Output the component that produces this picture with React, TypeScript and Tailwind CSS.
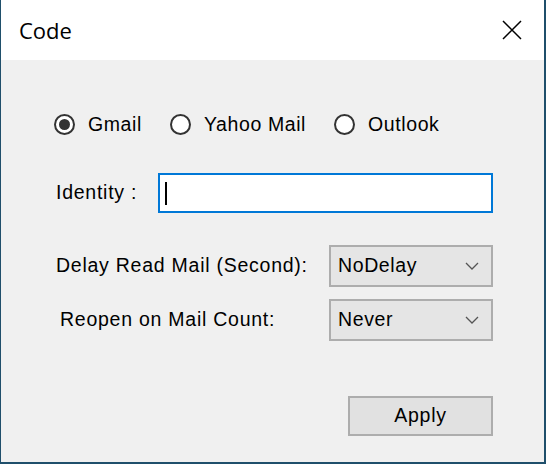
import { useState } from 'react';

const font = { fontFamily: '"Liberation Sans", Arial, sans-serif' };

function Radio({ label, checked, onClick }: { label: string; checked: boolean; onClick: () => void }) {
    return (
        <button type="button" onClick={onClick} className="flex items-center gap-[13px] text-[19.5px] tracking-[0.6px] text-black leading-none">
            <span className="w-[21px] h-[21px] rounded-full border-2 border-[#333333] bg-white flex items-center justify-center">
                {checked && <span className="w-[11px] h-[11px] rounded-full bg-[#333333]" />}
            </span>
            <span>{label}</span>
        </button>
    );
}

function Combo({ value }: { value: string }) {
    return (
        <div className="w-[164px] h-[42px] border-2 border-[#adadad] bg-[#e5e5e5] flex items-center justify-between pl-[7px] pr-[12px] text-[19.5px] tracking-[0.6px] text-black">
            <span>{value}</span>
            <svg width="14" height="8" viewBox="0 0 14 8" fill="none" stroke="#555" strokeWidth="1.3">
                <path d="M1 1l6 6 6-6" />
            </svg>
        </div>
    );
}

export default function App() {
    const [mail, setMail] = useState('Gmail');

    return (
        <div className="w-[546px] h-[464px] flex flex-col bg-[#f0f0f0] border-l border-r-2 border-b-2 border-[#1f4f6b]" style={font}>
            {/* barra de título */}
            <div className="h-[60px] bg-white flex items-center justify-between pl-[18px] pr-[22px]">
                <span className="text-[22px] text-black" style={{ fontFamily: '"Open Sans", "Noto Sans", sans-serif' }}>Code</span>
                <svg width="20" height="20" viewBox="0 0 20 20" stroke="#000" strokeWidth="1.5">
                    <path d="M1 1l18 18M19 1L1 19" />
                </svg>
            </div>

            <div className="flex flex-col pl-[53px] pr-[51px] text-[19.5px] tracking-[0.75px]">
                <div className="flex items-center gap-[28px] mt-[54px]">
                    {['Gmail', 'Yahoo Mail', 'Outlook'].map(m => (
                        <Radio key={m} label={m} checked={mail === m} onClick={() => setMail(m)} />
                    ))}
                </div>

                <div className="flex items-center mt-[38px] h-[40px]">
                    <span className="ml-[2px] w-[102px]">Identity :</span>
                    <div className="w-[337px] h-[40px] border-2 border-[#0078d7] bg-white flex items-center pl-[5px]">
                        <span className="w-[2px] h-[23px] bg-black" />
                    </div>
                </div>

                <div className="flex items-center justify-between mt-[32px] ml-[2px]">
                    <span>Delay Read Mail (Second):</span>
                    <Combo value="NoDelay" />
                </div>

                <div className="flex items-center justify-between mt-[12px] ml-[6px]">
                    <span>Reopen on Mail Count:</span>
                    <Combo value="Never" />
                </div>

                <div className="flex justify-end mt-[55px]">
                    <button type="button" className="w-[145px] h-[40px] border-2 border-[#adadad] bg-[#e1e1e1] text-black">
                        Apply
                    </button>
                </div>
            </div>
        </div>
    );
}
